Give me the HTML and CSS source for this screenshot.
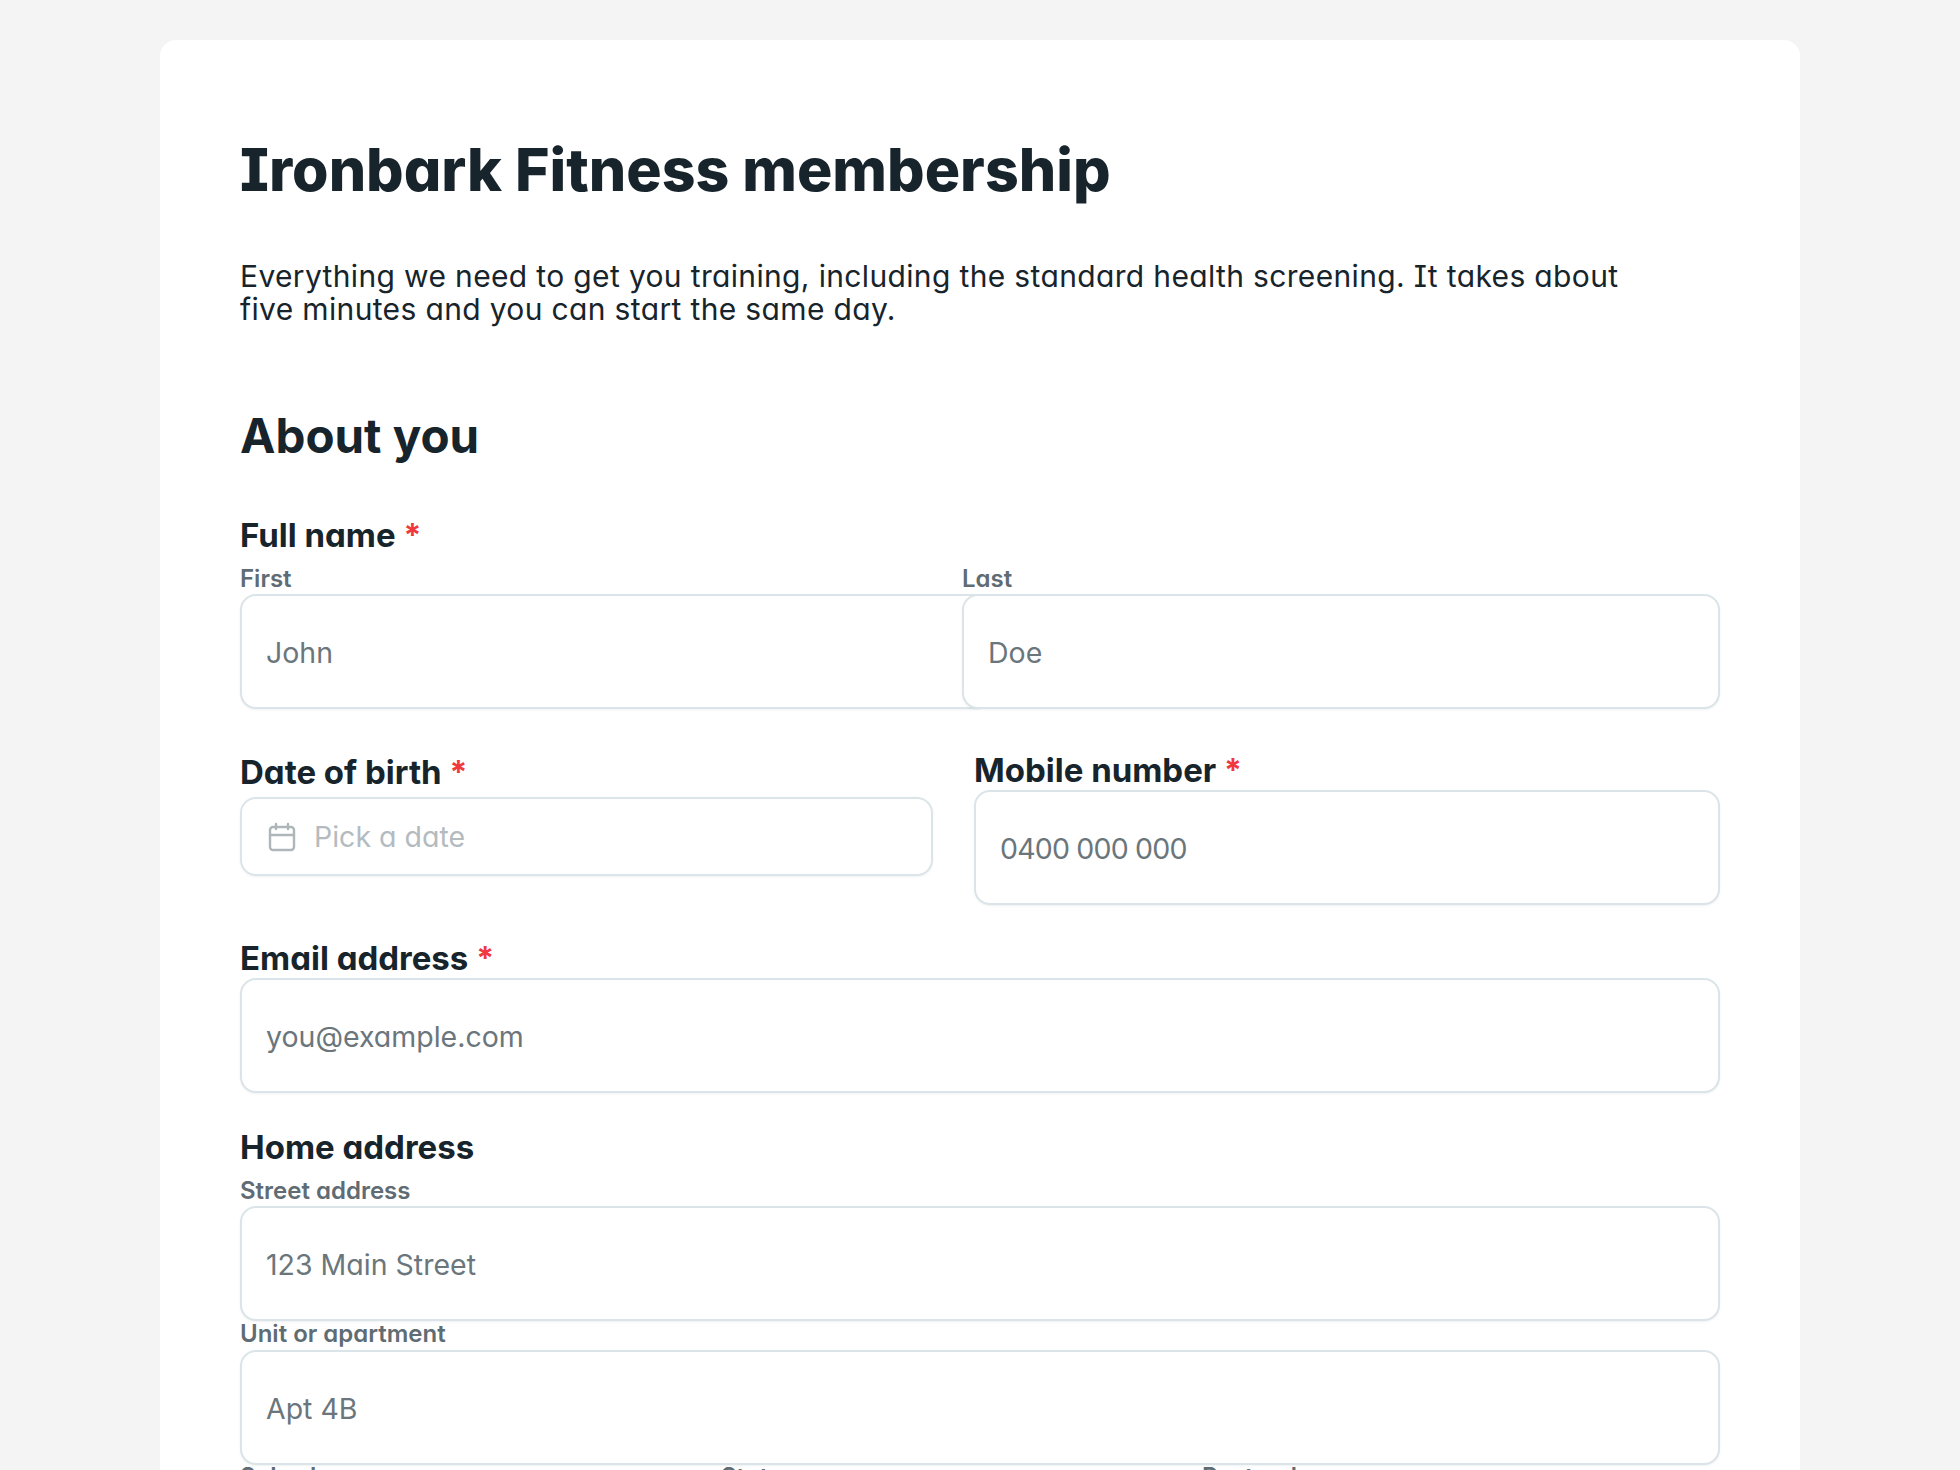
FILE: index.html
```html
<!DOCTYPE html>
<html lang="en">
<head>
  <meta charset="UTF-8" />
  <meta name="viewport" content="width=device-width, initial-scale=1.0" />
  <title>Ironbark Fitness membership</title>
  <link rel="stylesheet" href="styles.css">
</head>
<body>
  <main class="card">
    <h1>Ironbark Fitness membership</h1>
    <p class="intro">Everything we need to get you training, including the standard health screening. It takes about five minutes and you can start the same day.</p>

    <h2>About you</h2>

    <div class="field-label name-label">Full name <span class="req">*</span></div>
    <div class="name-row">
      <div class="name-first">
        <div class="sub-label">First</div>
        <div class="input"><span>John</span></div>
      </div>
      <div class="name-last">
        <div class="sub-label">Last</div>
        <div class="input"><span>Doe</span></div>
      </div>
    </div>

    <div class="two-col">
      <div class="dob">
        <div class="field-label">Date of birth <span class="req">*</span></div>
        <div class="date-input">
          <svg class="cal" viewBox="0 0 28 30" fill="none" stroke="currentColor" stroke-width="2.4" stroke-linecap="round" stroke-linejoin="round">
            <rect x="2" y="5" width="24" height="23" rx="3"></rect>
            <path d="M2 13h24M8 2v5M20 2v5"></path>
          </svg>
          <span>Pick a date</span>
        </div>
      </div>
      <div class="mobile">
        <div class="field-label">Mobile number <span class="req">*</span></div>
        <div class="input"><span class="digits">0400 000 000</span></div>
      </div>
    </div>

    <div class="email">
      <div class="field-label">Email address <span class="req">*</span></div>
      <div class="input"><span>you@example.com</span></div>
    </div>

    <div class="field-label home-label">Home address</div>
    <div class="sub-label street-label">Street address</div>
    <div class="input"><span>123 Main Street</span></div>
    <div class="sub-label unit-label">Unit or apartment</div>
    <div class="input"><span>Apt 4B</span></div>

    <div class="three-col">
      <div class="sub-label">Suburb</div>
      <div class="sub-label">State</div>
      <div class="sub-label">Postcode</div>
    </div>
  </main>
</body>
</html>
```

FILE: styles.css
```css
* {
  box-sizing: border-box;
}

html, body {
  height: 100%;
  overflow: hidden;
}

body {
  margin: 0;
  background: #f4f4f4;
  color: #17242b;
  font-family: "Inter", "Noto Sans", sans-serif;
  font-feature-settings: "cv08", "cv11";
}

.card {
  width: 1640px;
  height: calc(100vh - 40px);
  overflow: hidden;
  margin: 40px 0 0 160px;
  padding: 96px 80px 0;
  background: #fff;
  border-radius: 16px 16px 0 0;
}

h1 {
  margin: 0;
  font-size: 59px;
  line-height: 68px;
  font-weight: 800;
}

.intro {
  margin: 56px 0 0;
  width: 1400px;
  font-size: 30px;
  line-height: 33px;
  letter-spacing: 0.35px;
}

h2 {
  margin: 82px 0 0;
  font-size: 47.5px;
  line-height: 56px;
  font-weight: 700;
}

.field-label {
  font-size: 33px;
  line-height: 38px;
  font-weight: 700;
}

.req {
  color: #f0383e;
  font-size: 32px;
}

.name-label {
  margin-top: 52px;
}

.sub-label {
  font-size: 24px;
  line-height: 30px;
  font-weight: 600;
  color: #5f6c73;
}

.input {
  height: 115px;
  display: flex;
  align-items: center;
  padding: 2px 24px 0;
  background: #fff;
  border: 2px solid #dbe4e8;
  border-radius: 16px;
  box-shadow: 0 1px 2px rgba(60, 80, 90, 0.08);
  color: #6b767c;
  font-size: 28.5px;
}

.digits {
  letter-spacing: -0.8px;
}

.name-row {
  display: flex;
  margin-top: 9px;
}

.name-first {
  width: 722px;
}

.name-first .input {
  width: 750px;
}

.name-last {
  flex: 1;
  position: relative;
}

.two-col {
  display: flex;
  margin-top: 41px;
}

.dob {
  width: 693px;
  padding-top: 3px;
}

.mobile {
  margin-left: 41px;
  padding-top: 1px;
  flex: 1;
}

.date-input {
  height: 79px;
  margin-top: 5px;
  display: flex;
  align-items: center;
  gap: 18px;
  padding: 0 26px;
  border: 2px solid #dbe4e8;
  border-radius: 16px;
  box-shadow: 0 1px 2px rgba(60, 80, 90, 0.08);
  color: #b4bbbf;
  font-size: 28.5px;
}

.cal {
  width: 28px;
  height: 30px;
  color: #aeb6ba;
}

.email {
  margin-top: 34px;
}

.home-label {
  margin-top: 35px;
}

.street-label {
  margin-top: 10px;
}

.unit-label {
  margin: -2px 0 1px;
}

.three-col {
  display: grid;
  grid-template-columns: repeat(3, 481px);
  margin-top: -3px;
}
```
